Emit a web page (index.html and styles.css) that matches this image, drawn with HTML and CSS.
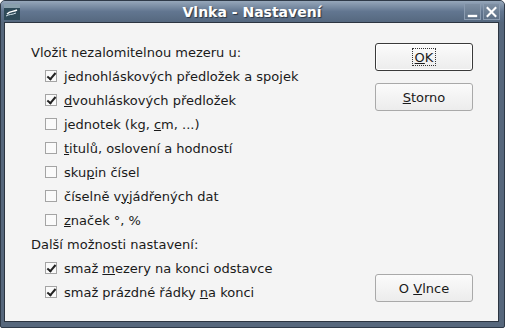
FILE: index.html
```html
<!DOCTYPE html>
<html lang="cs">
<head>
	<meta charset="UTF-8">
	<title>Vlnka - Nastavení</title>
	<link rel="stylesheet" href="styles.css">
</head>
<body>
    <div class="win">
        <div class="titlebar">
            <span class="appicon">
                <svg width="16" height="16" viewBox="0 0 16 16">
                    <rect x="0" y="0" width="16" height="16" fill="#2e4a58"/>
                    <rect x="0" y="0" width="16" height="4" fill="#8aa0ad"/>
                    <path d="M3 10 C6 7 9 8 13 6" stroke="#fff" stroke-width="1.4" fill="none"/>
                    <path d="M2 12 C5 10 8 11 12 9" stroke="#cfe0e8" stroke-width="1" fill="none"/>
                </svg>
            </span>
            <span class="title">Vlnka - Nastavení</span>
            <span class="tbtns">
                <span class="tbtn">
                    <svg width="16" height="16" viewBox="0 0 16 16"><rect x="3" y="11" width="10" height="2.5" fill="#fff"/></svg>
                </span>
                <span class="tbtn">
                    <svg width="16" height="16" viewBox="0 0 16 16"><path d="M3 3 L13 13 M13 3 L3 13" stroke="#fff" stroke-width="2.2"/></svg>
                </span>
            </span>
        </div>
        <div class="panel">
            <div class="opts">
                <div class="row head">Vložit nezalomitelnou mezeru u:</div>
                <div class="row chk"><span class="box on"></span><span><u>j</u>ednohláskových předložek a spojek</span></div>
                <div class="row chk"><span class="box on"></span><span><u>d</u>vouhláskových předložek</span></div>
                <div class="row chk"><span class="box"></span><span>jednotek (kg, <u>c</u>m, ...)</span></div>
                <div class="row chk"><span class="box"></span><span><u>t</u>itulů, oslovení a hodností</span></div>
                <div class="row chk"><span class="box"></span><span>sku<u>p</u>in čísel</span></div>
                <div class="row chk"><span class="box"></span><span>číselně v<u>y</u>jádřených dat</span></div>
                <div class="row chk"><span class="box"></span><span><u>z</u>naček °, %</span></div>
                <div class="row head">Další možnosti nastavení:</div>
                <div class="row chk"><span class="box on"></span><span>smaž <u>m</u>ezery na konci odstavce</span></div>
                <div class="row chk"><span class="box on"></span><span>smaž prázdné řádky <u>n</u>a konci</span></div>
            </div>
            <div class="btns">
                <button class="btn def"><span class="focus"><u>O</u>K</span></button>
                <button class="btn"><u>S</u>torno</button>
                <div class="spacer"></div>
                <button class="btn">O <u>V</u>lnce</button>
            </div>
        </div>
    </div>
</body>
</html>
```

FILE: styles.css
```css
*{
    margin: 0;
    padding: 0;
    box-sizing: border-box;
}
body{
    width: 505px;
    height: 328px;
    overflow: hidden;
    font-family: "DejaVu Sans", Verdana, sans-serif;
    font-size: 13px;
    color: #1a1a1a;
}
.win{
    width: 505px;
    height: 328px;
    display: flex;
    flex-direction: column;
    background: #56677c;
    border: 1px solid #2f3a48;
    border-radius: 5px 5px 2px 2px;
    padding: 0 5px 5px 3px;
}
.titlebar{
    height: 21px;
    display: grid;
    grid-template-columns: 1fr auto 1fr;
    align-items: center;
    background: linear-gradient(#96a7ba, #627690 50%, #55687f);
    margin: 0 -5px 0 -3px;
    padding: 0 4px 0 3px;
    border-radius: 4px 4px 0 0;
}
.appicon{
    width: 16px;
    height: 16px;
    display: flex;
    justify-self: start;
}
.title{
    color: #fff;
    font-weight: bold;
    font-size: 14px;
    text-shadow: 1px 1px 1px #2b3542;
}
.tbtns{
    display: flex;
    gap: 2px;
    justify-self: end;
}
.tbtn{
    width: 17px;
    height: 17px;
    display: flex;
    align-items: center;
    justify-content: center;
    background: linear-gradient(#7f90a4, #5d7086);
    border: 1px solid #8a9bb0;
}
.panel{
    flex: 1;
    display: flex;
    background: #f4f4f4;
    border: 1px solid #2b3440;
    padding: 17px 25px 11px 26px;
}
.opts{
    flex: 1;
    display: flex;
    flex-direction: column;
}
.row{
    height: 24px;
    display: flex;
    align-items: center;
}
.chk{
    padding-left: 14px;
    gap: 7px;
}
.box{
    width: 12px;
    height: 12px;
    border: 1px solid #a4a4a4;
    background: #fafafa;
    position: relative;
}
.box.on::after{
    content: "";
    position: absolute;
    left: 3px;
    top: 0px;
    width: 3px;
    height: 7px;
    border-right: 2px solid #222;
    border-bottom: 2px solid #222;
    transform: rotate(40deg);
}
.btns{
    width: 98px;
    display: flex;
    flex-direction: column;
}
.spacer{
    flex: 1;
}
.btn{
    height: 28px;
    margin-top: 4px;
    margin-bottom: 8px;
    font-family: "DejaVu Sans", Verdana, sans-serif;
    font-size: 13px;
    color: #1a1a1a;
    background: linear-gradient(#fbfbfb, #ececec);
    border: 1px solid #a9a9a9;
    border-radius: 3px;
}
.btn.def{
    margin-top: 3px;
    border: 1px solid #3a3a3a;
    box-shadow: inset 0 0 0 1px #fff;
}
.focus{
    border: 1px dotted #333;
    padding: 1px 2px 0;
}
```
